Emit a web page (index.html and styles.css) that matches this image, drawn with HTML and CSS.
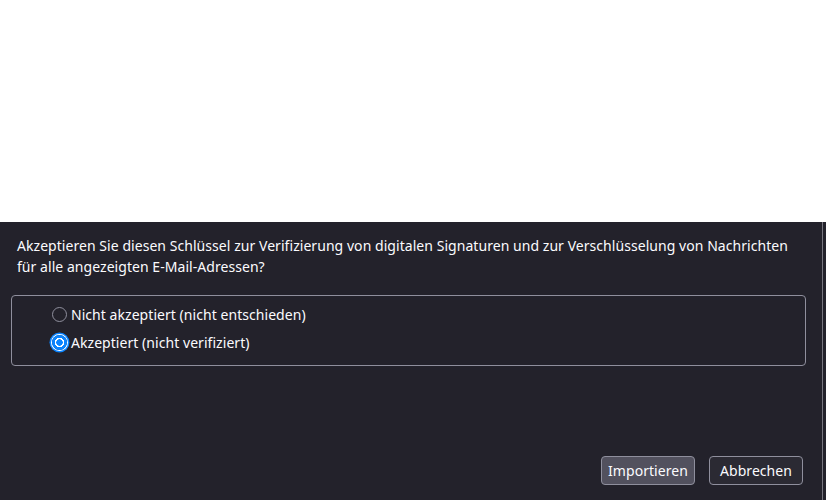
FILE: index.html
```html
<!DOCTYPE html>
<html lang="de">
<head>
    <meta charset="UTF-8">
    <title>Schlüssel akzeptieren</title>
    <link rel="stylesheet" href="styles.css">
</head>
<body>
    <div class="blank"></div>

    <div class="dialog">
        <div class="dialog-main">
            <p class="question">
                Akzeptieren Sie diesen Schlüssel zur Verifizierung von digitalen Signaturen und zur Verschlüsselung von Nachrichten<br>
                für alle angezeigten E-Mail-Adressen?
            </p>

            <div class="choices">
                <label class="choice">
                    <span class="radio"></span>
                    <span>Nicht akzeptiert (nicht entschieden)</span>
                </label>
                <label class="choice">
                    <span class="radio checked"></span>
                    <span>Akzeptiert (nicht verifiziert)</span>
                </label>
            </div>

            <div class="actions">
                <button class="btn btn-primary">Importieren</button>
                <button class="btn">Abbrechen</button>
            </div>
        </div>
        <div class="scroll-edge"></div>
    </div>
</body>
</html>
```

FILE: styles.css
```css
:root {
    --dialog-bg: #23222b;
    --text: #fbfbfe;
    --border: #8f8f9d;
    --btn-bg: #2b2a33;
    --btn-primary-bg: #52515e;
    --accent: #0a84ff;
}

* {
    margin: 0;
    padding: 0;
    box-sizing: border-box;
}

body {
    width: 826px;
    height: 500px;
    background: #ffffff;
    font-family: 'Noto Sans', 'Open Sans', Arial, sans-serif;
    font-size: 14px;
    letter-spacing: 0.05px;
    color: var(--text);
    display: flex;
    flex-direction: column;
    overflow: hidden;
}

.blank {
    height: 222px;
    flex-shrink: 0;
}

.dialog {
    flex: 1;
    display: flex;
    background: var(--dialog-bg);
}

.dialog-main {
    flex: 1;
    display: flex;
    flex-direction: column;
    border-right: 1px solid #77767f;
    padding: 13px 0 0 11px;
}

.scroll-edge {
    width: 3px;
}

.question {
    padding-left: 6px;
    line-height: 21px;
    white-space: nowrap;
}

.choices {
    margin-top: 18px;
    width: 795px;
    height: 71px;
    border: 1px solid var(--border);
    border-radius: 4px;
    padding: 8px 0 0 40px;
    display: flex;
    flex-direction: column;
    gap: 8px;
}

.choice {
    display: flex;
    align-items: center;
    height: 20px;
}

.radio {
    width: 15px;
    height: 15px;
    border: 1px solid #8f8f9d;
    border-radius: 50%;
    margin-right: 4px;
    flex-shrink: 0;
}

.radio.checked {
    border: none;
    background: radial-gradient(circle, var(--accent) 0 3px, #ffffff 3.5px 4.5px, var(--accent) 5px);
    box-shadow: 0 0 0 1px #ffffff, 0 0 0 2.5px var(--accent);
}

.actions {
    margin-top: auto;
    margin-bottom: 15px;
    align-self: flex-end;
    display: flex;
    gap: 14px;
    padding-right: 19px;
}

.btn {
    height: 29px;
    width: 94px;
    border: 1px solid var(--border);
    border-radius: 4px;
    background: var(--btn-bg);
    color: var(--text);
    font-family: inherit;
    font-size: 14px;
    letter-spacing: 0.05px;
}

.btn-primary {
    background: var(--btn-primary-bg);
}
```
